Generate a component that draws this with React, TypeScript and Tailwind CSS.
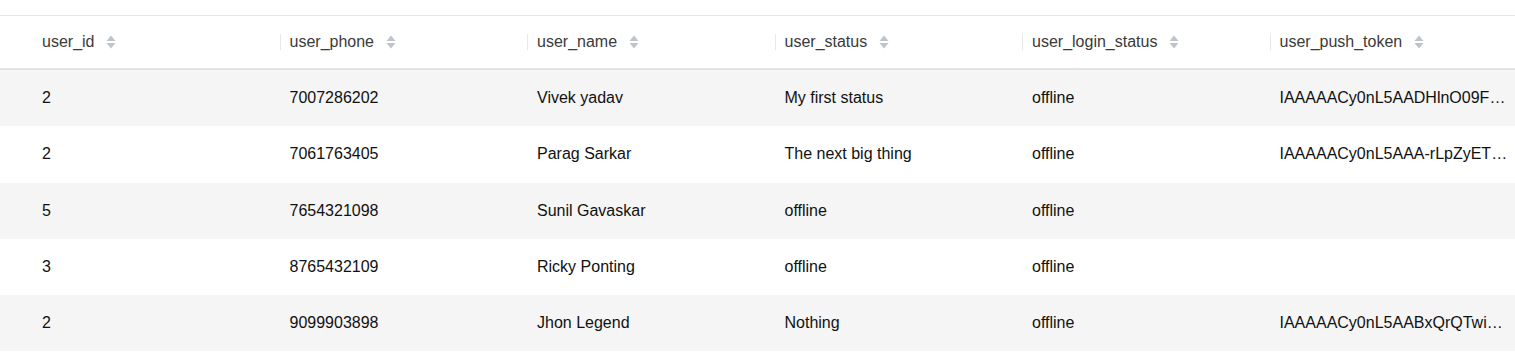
const columns = ['user_id', 'user_phone', 'user_name', 'user_status', 'user_login_status', 'user_push_token'];

const rows = [
  ['2', '7007286202', 'Vivek yadav', 'My first status', 'offline', 'IAAAAACy0nL5AADHlnO09F…'],
  ['2', '7061763405', 'Parag Sarkar', 'The next big thing', 'offline', 'IAAAAACy0nL5AAA-rLpZyET…'],
  ['5', '7654321098', 'Sunil Gavaskar', 'offline', 'offline', ''],
  ['3', '8765432109', 'Ricky Ponting', 'offline', 'offline', ''],
  ['2', '9099903898', 'Jhon Legend', 'Nothing', 'offline', 'IAAAAACy0nL5AABxQrQTwi…'],
];

const SortIcon = () => (
  <svg width="10" height="14" viewBox="0 0 10 14" className="shrink-0">
    <path d="M5 0.5 L9.5 6 L0.5 6 Z" fill="#bfc3ca" />
    <path d="M5 13.5 L9.5 8 L0.5 8 Z" fill="#bfc3ca" />
  </svg>
);

const grid = 'grid grid-cols-[32px_repeat(6,247.5px)]';

const App = () => {
  return (
    <div className="w-[1515px] overflow-hidden bg-white pt-[15px] font-['Liberation_Sans',Arial,sans-serif] text-[16px]">
      <div className={`${grid} h-[55px] border-t border-b-2 border-t-[#e6e6e6] border-b-[#e3e3e3] text-[#3a3a3a]`}>
        <div />
        {columns.map((col, i) => (
          <div key={col} className="flex items-center">
            <span className={`h-[16px] w-px ${i === 0 ? 'bg-transparent' : 'bg-[#e8e8e8]'}`} />
            <span className="ml-[9px] whitespace-nowrap">{col}</span>
            <span className="ml-[12px] flex items-center">
              <SortIcon />
            </span>
          </div>
        ))}
      </div>
      {rows.map((row, r) => (
        <div key={r} className={`${grid} h-[56.25px] text-[#111] ${r % 2 === 0 ? 'bg-[#f5f5f5]' : 'bg-white'}`}>
          <div />
          {row.map((cell, c) => (
            <div key={c} className="flex min-w-0 items-center pl-[10px]">
              <span className="whitespace-nowrap">{cell}</span>
            </div>
          ))}
        </div>
      ))}
    </div>
  );
};

export default App;
